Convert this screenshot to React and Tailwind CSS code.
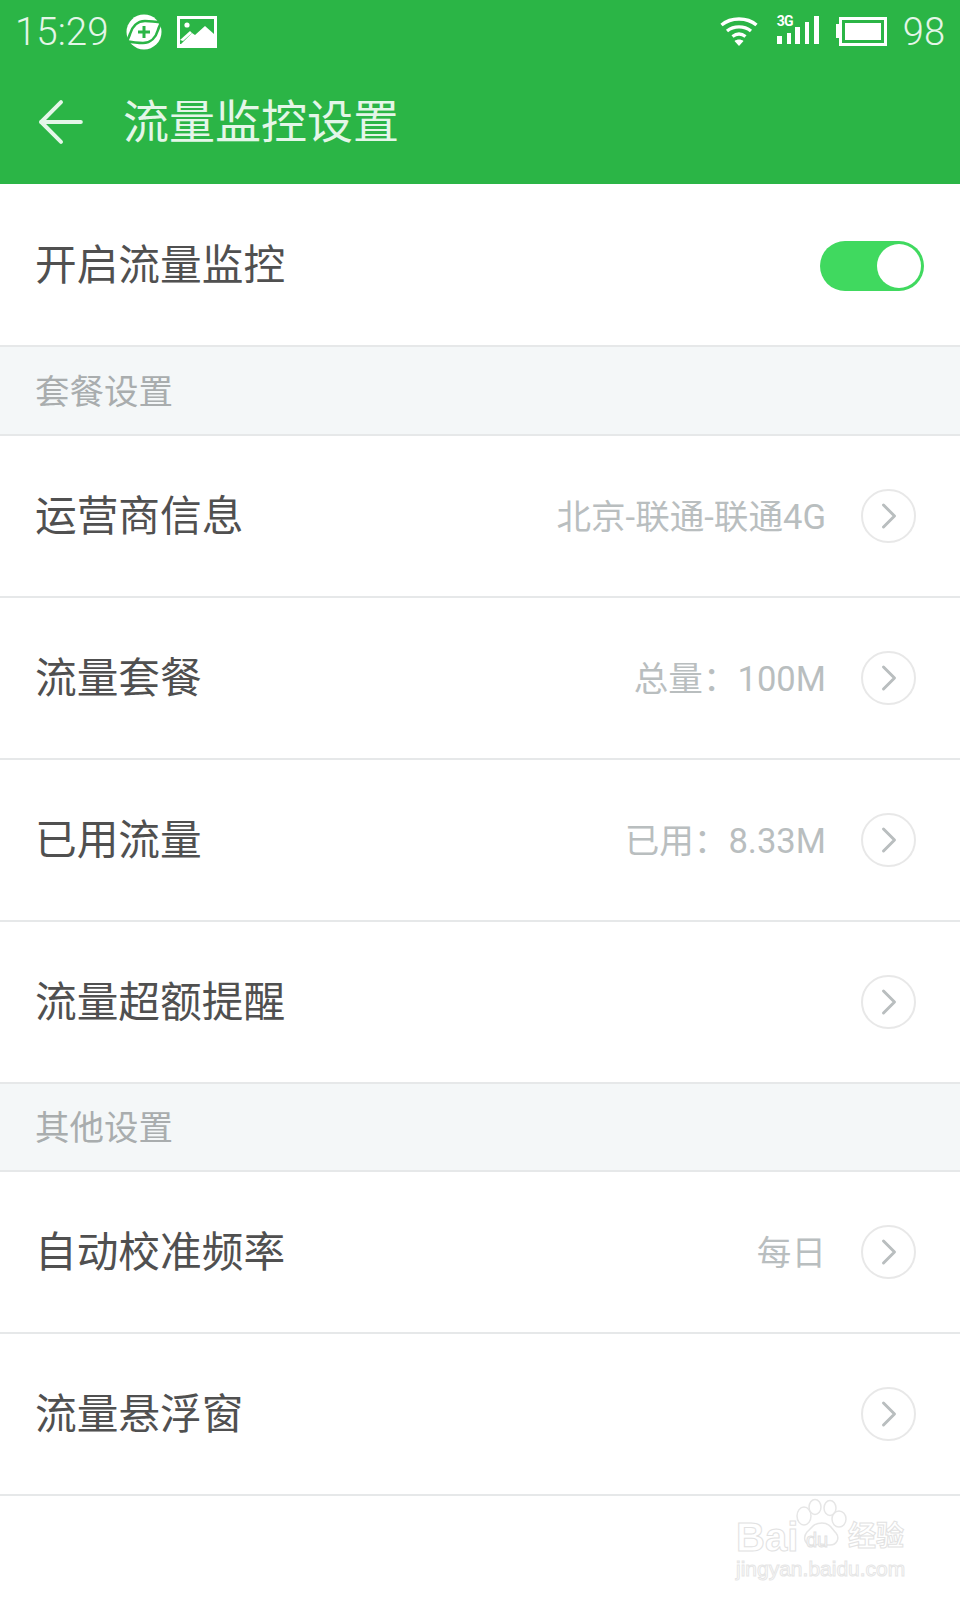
import { ArrowLeft, ChevronRight } from 'lucide-react'

const cjk = '[font-family:Roboto,"Noto_Sans_CJK_SC",sans-serif]'

function Row({ label, value }) {
  return (
    <div className="flex h-[162px] items-center border-b-2 border-[#e6e8e9] bg-white pl-[35px] pr-[44px]">
      <span className="flex-1 pt-[2px] text-[41.700px] leading-none text-[#505050]">{label}</span>
      {value && <span className="mr-[35px] pt-[2px] text-[34.600px] leading-none text-[#b9bebf]">{value}</span>}
      <div className="flex h-[54px] w-[55px] items-center justify-center rounded-full border-2 border-[#e8e8e8]">
        <ChevronRight size={44} strokeWidth={1.6} className="text-[#b9bebf]" />
      </div>
    </div>
  )
}

function Section({ label, className }) {
  return (
    <div className={`flex items-center border-b-2 border-[#e6e8e9] bg-[#f4f7f8] pl-[35px] text-[34.500px] leading-none text-[#a9adae] ${className}`}>
      {label}
    </div>
  )
}

function SecurityIcon() {
  return (
    <svg width="38" height="36" viewBox="0 0 38 36">
      <circle cx="19" cy="18" r="17.500" fill="white" />
      <path d="M39 9C33 8 27 7 20 7 12 7 7 13 5 20c-1 3-2 6-4 8" fill="none" stroke="#2bb546" strokeWidth="2.600" />
      <path d="M-1 27c6 1 12 2 19 2 8 0 13-6 15-13 1-3 2-6 4-8" fill="none" stroke="#2bb546" strokeWidth="2.600" />
      <path d="M17.500 12h3v4.500H25v3h-4.500V24h-3v-4.500H13v-3h4.500z" fill="#2bb546" />
    </svg>
  )
}

function PictureIcon() {
  return (
    <svg width="40" height="32" viewBox="0 0 40 32">
      <path fill="white" d="M0 0h40v32H0z" />
      <path d="M3 3h34v15l-9-8-10 9-3-2-11 11H3z" fill="#2bb546" />
      <circle cx="10" cy="9" r="2.600" fill="white" />
      <path d="M3 24l10-9 2 2-9 8z" fill="white" />
    </svg>
  )
}

function WifiIcon() {
  return (
    <svg width="38" height="30" viewBox="0 0 38 30" fill="none" stroke="white" strokeWidth="3.400">
      <path d="M1.500 9C11 1 27 1 36.500 9" />
      <path d="M7 15c7-5.500 17-5.500 24 0" />
      <path d="M12.500 20.500c4-3 9-3 13 0" />
      <path d="M14.500 25L19 30l4.500-5c-2.500-2-6.500-2-9 0z" fill="white" stroke="none" />
    </svg>
  )
}

function SignalBars() {
  return (
    <div className="relative h-[30px] w-[42px]">
      <span className="absolute left-0 top-0 text-[14px] font-bold leading-none tracking-[-1px] text-white">3G</span>
      <div className="absolute inset-0 flex items-end justify-between">
        <div className="h-[8px] w-[5px] bg-white" />
        <div className="h-[11px] w-[4px] bg-white" />
        <div className="h-[17px] w-[5px] bg-white" />
        <div className="h-[22px] w-[4px] bg-white" />
        <div className="h-[28px] w-[5px] bg-white" />
      </div>
    </div>
  )
}

function BatteryIcon() {
  return (
    <div className="flex items-center">
      <div className="h-[14px] w-[3px] bg-white" />
      <div className="h-[29px] w-[48px] border-[3px] border-white p-[3px]">
        <div className="h-full w-full bg-white" />
      </div>
    </div>
  )
}

function BaiduMark() {
  return (
    <div className="absolute left-[736px] top-[1497px] h-[90px] w-[180px]">
      <span className="absolute left-0 top-[20px] font-['Liberation_Sans',sans-serif] text-[40px] font-bold leading-none text-white [-webkit-text-stroke:1px_#e2e2e2]">Bai</span>
      <svg className="absolute left-[59px] top-0" width="52" height="54" viewBox="0 0 52 50" fill="none" stroke="#e6e6e6" strokeWidth="1.500">
        <ellipse cx="9" cy="17" rx="7" ry="9" />
        <ellipse cx="20" cy="8" rx="6" ry="7.500" />
        <ellipse cx="35" cy="9" rx="6" ry="7.500" />
        <ellipse cx="44" cy="20" rx="7" ry="8" />
        <path d="M27 24c8 0 10 6 14 10 4 5 1 12-6 12-4 0-6-1-9-1-3 0-6 2-10 1-7-1-8-8-4-13 5-4 6-9 15-9z" />
      </svg>
      <span className="absolute left-[70px] top-[33px] font-['Liberation_Sans',sans-serif] text-[20px] leading-none text-white [-webkit-text-stroke:1px_#e2e2e2]">du</span>
      <span className="absolute left-[112px] top-[23px] font-['Noto_Sans_CJK_SC',sans-serif] text-[28px] font-bold leading-none text-white [-webkit-text-stroke:1px_#e2e2e2]">经验</span>
      <span className="absolute left-0 top-[61px] font-['Liberation_Sans',sans-serif] text-[21px] leading-none text-white [-webkit-text-stroke:1px_#e6e6e6]">jingyan.baidu.com</span>
    </div>
  )
}

export default function App() {
  return (
    <div className={`relative h-[1600px] w-[960px] overflow-hidden bg-white ${cjk}`}>
      <div className="h-[184px] bg-[#2bb546] text-white">
        <div className="flex h-[62px] items-center pl-[15px] pr-[15px] pt-[2px]">
          <span className="text-[38.500px] font-light leading-none text-[#e4f6e8]">15:29</span>
          <div className="ml-[16px]"><SecurityIcon /></div>
          <div className="ml-[14px]"><PictureIcon /></div>
          <div className="ml-auto mb-[2px]"><WifiIcon /></div>
          <div className="ml-[19px] mb-[6px]"><SignalBars /></div>
          <div className="ml-[17px] mb-[2px]"><BatteryIcon /></div>
          <span className="ml-[16px] text-[38px] font-light leading-none text-[#e4f6e8]">98</span>
        </div>
        <div className="flex h-[120px] items-center pl-[27px]">
          <ArrowLeft size={68} strokeWidth={1.400} className="text-[#e4f6e8]" />
          <span className="ml-[28px] text-[46px] leading-none text-[#e4f6e8]">流量监控设置</span>
        </div>
      </div>

      <div className="flex h-[163px] items-center border-b-2 border-[#e6e8e9] pl-[35px] pr-[36px] pt-[2px]">
        <span className="flex-1 text-[41.700px] leading-none text-[#505050]">开启流量监控</span>
        <div className="flex h-[50px] w-[104px] items-center justify-end rounded-full bg-[#40d95f] pr-[3px]">
          <div className="h-[44px] w-[44px] rounded-full bg-white" />
        </div>
      </div>

      <Section label="套餐设置" className="h-[89px] pt-[3px]" />
      <Row label="运营商信息" value="北京-联通-联通4G" />
      <Row label="流量套餐" value="总量：100M" />
      <Row label="已用流量" value="已用：8.33M" />
      <Row label="流量超额提醒" />
      <Section label="其他设置" className="h-[88px] pt-[3px]" />
      <Row label="自动校准频率" value="每日" />
      <Row label="流量悬浮窗" />
      <BaiduMark />
    </div>
  )
}
